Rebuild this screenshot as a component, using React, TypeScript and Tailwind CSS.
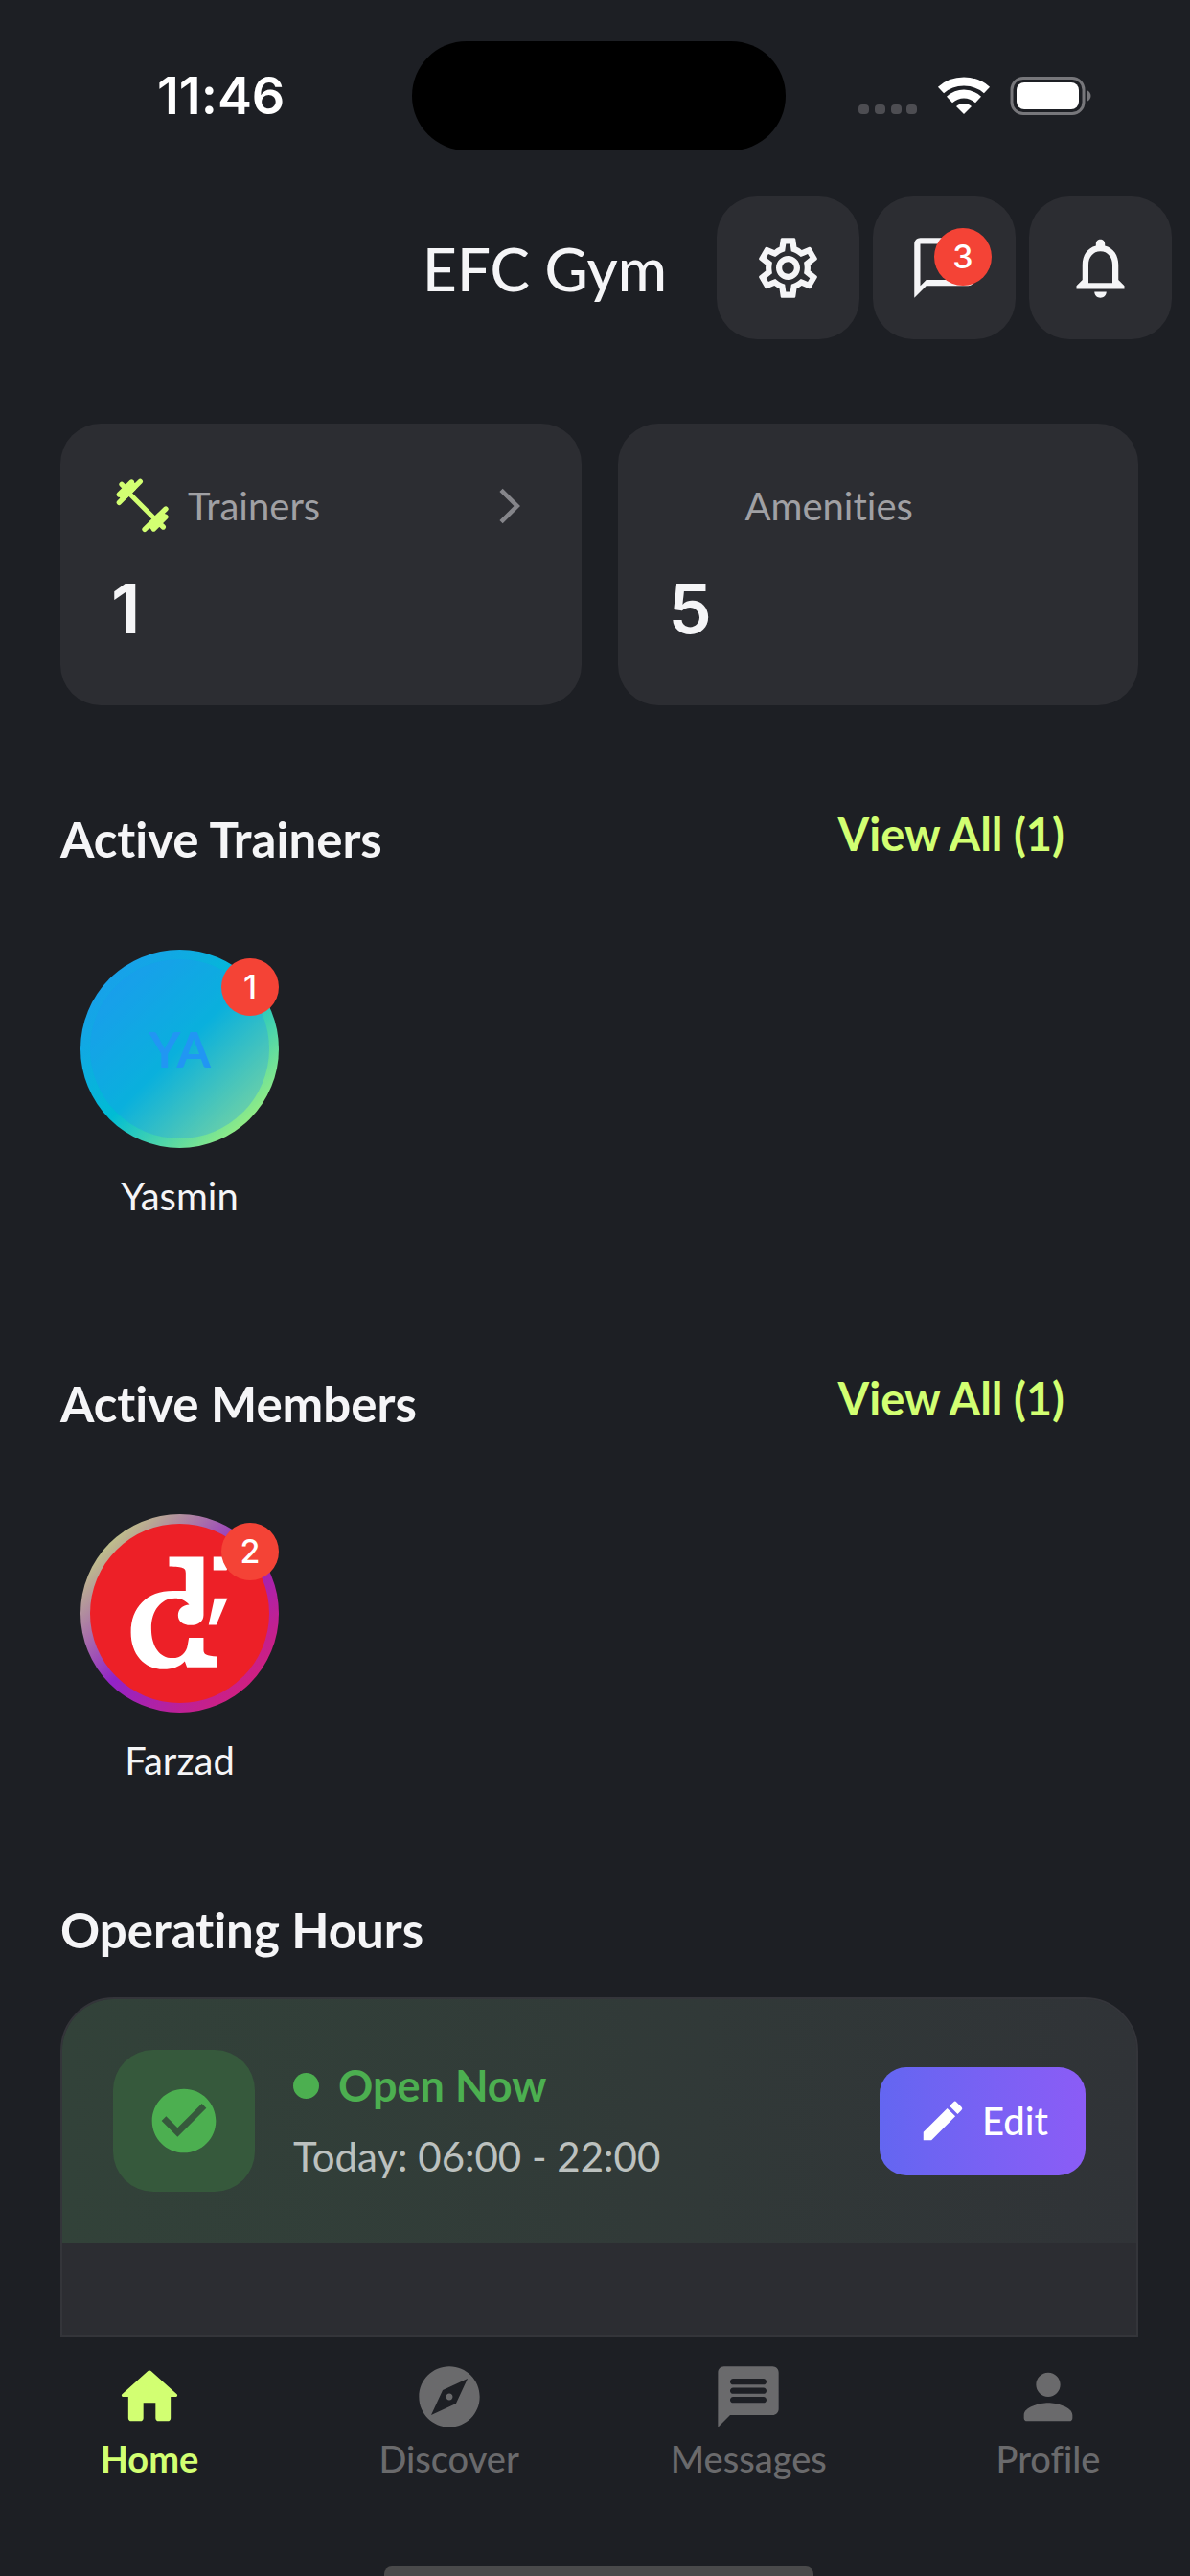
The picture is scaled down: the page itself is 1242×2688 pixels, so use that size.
import type { ReactNode } from 'react';
import {
  MdArrowForwardIos,
  MdCheckCircle,
  MdChatBubbleOutline,
  MdEdit,
  MdExplore,
  MdNotificationsNone,
  MdOutlineSettings,
} from 'react-icons/md';

// Rounded Material glyphs that react-icons does not ship
const ROUNDED = {
  home: 'M10 19v-5h4v5c0 .55.45 1 1 1h3c.55 0 1-.45 1-1v-7h1.7c.46 0 .68-.57.33-.87L12.67 3.6c-.38-.34-.96-.34-1.34 0l-8.36 7.53c-.34.3-.13.87.33.87H5v7c0 .55.45 1 1 1h3c.55 0 1-.45 1-1z',
  message:
    'M20 2H4c-1.1 0-1.99.9-1.99 2L2 22l4-4h14c1.1 0 2-.9 2-2V4c0-1.1-.9-2-2-2zm-3 12H7c-.55 0-1-.45-1-1s.45-1 1-1h10c.55 0 1 .45 1 1s-.45 1-1 1zm0-3H7c-.55 0-1-.45-1-1s.45-1 1-1h10c.55 0 1 .45 1 1s-.45 1-1 1zm0-3H7c-.55 0-1-.45-1-1s.45-1 1-1h10c.55 0 1 .45 1 1s-.45 1-1 1z',
  person:
    'M12 12c2.21 0 4-1.79 4-4s-1.79-4-4-4-4 1.79-4 4 1.79 4 4 4zm0 2c-2.67 0-8 1.34-8 4v1c0 .55.45 1 1 1h14c.55 0 1-.45 1-1v-1c0-2.66-5.33-4-8-4z',
};

function RoundedIcon({ name }: { name: keyof typeof ROUNDED }) {
  return (
    <svg viewBox="0 0 24 24" className="size-[76px]" fill="currentColor">
      <path d={ROUNDED[name]} />
    </svg>
  );
}

function DumbbellIcon() {
  return (
    <svg viewBox="33 30 198 198" className="size-[66px]" fill="none" stroke="#d2ff72" strokeWidth="16" strokeLinecap="round">
      <path strokeWidth="15" d="M88 88L172 172" />
      <path d="M58 118L124 52M58 93L97 54M66 61L88 83" />
      <path d="M72 94L98 68" strokeWidth="30" />
      <path d="M204 138L138 202M204 163L166 201M196 195L176 175" />
      <path d="M190 162L164 188" strokeWidth="30" />
    </svg>
  );
}

function StatusBar() {
  return (
    <div className="grid grid-cols-[1fr_390px_1fr] items-center pt-[43px] pl-2">
      <span className="pl-[156px] font-['Inter',sans-serif] text-[54px] leading-[60px] font-semibold text-white">11:46</span>
      <div className="h-[114px] rounded-full bg-black" />
      <div className="flex items-center justify-end pr-[102px]">
        <svg viewBox="0 0 244 40" className="h-[40px] w-[244px]">
          <g fill="#4d4d52">
            <rect x="0" y="29" width="11" height="10" rx="4" />
            <rect x="17" y="29" width="11" height="10" rx="4" />
            <rect x="34" y="29" width="11" height="10" rx="4" />
            <rect x="50" y="29" width="11" height="10" rx="4" />
          </g>
          <g fill="none" stroke="#fff" strokeWidth="9">
            <path d="M86 14C99 2 121 2 134 14" />
            <path d="M95 24C104 16 116 16 125 24" />
          </g>
          <path d="M110 39L102 31C106 27 114 27 118 31Z" fill="#fff" />
          <rect x="160" y="1.500" width="75" height="37" rx="12" fill="none" stroke="#77777b" strokeWidth="3" />
          <rect x="165" y="6" width="65" height="28" rx="8" fill="#fff" />
          <path d="M238 14C244 16 244 24 238 26Z" fill="#77777b" />
        </svg>
      </div>
    </div>
  );
}

function CountBadge({ count, className }: { count: number; className: string }) {
  return (
    <span
      className={`absolute flex size-[60px] items-center justify-center rounded-full bg-[#f44336] font-['Inter',sans-serif] text-[34px] leading-none font-medium text-white ${className}`}
    >
      {count}
    </span>
  );
}

function HeaderButton({ label, children }: { label: string; children: ReactNode }) {
  return (
    <button aria-label={label} className="relative flex size-[149px] items-center justify-center rounded-[42px] bg-[#2c2d32] text-[#f5f5f7]">
      {children}
    </button>
  );
}

function StatCard({ label, value, icon, chevron }: { label: string; value: number; icon?: ReactNode; chevron?: boolean }) {
  return (
    <button className="rounded-[42px] bg-[#2c2d32] px-[53px] pt-[53px] pb-[61px] text-left">
      <span className="flex h-[66px] items-center gap-[14px]">
        <span className="w-[66px]">{icon}</span>
        <span className="flex-1 text-[40px] leading-[48px] text-[#a0a0a4]">{label}</span>
        {chevron && <MdArrowForwardIos className="size-[44px] text-[#85858a]" />}
      </span>
      <span className="mt-[34px] block font-['Inter',sans-serif] text-[72px] leading-[80px] font-semibold text-[#f5f5f7]">{value}</span>
    </button>
  );
}

function PeopleSection({ title, name, count, avatar, className }: {
  title: string;
  name: string;
  count: number;
  avatar: ReactNode;
  className: string;
}) {
  return (
    <section className={className}>
      <div className="flex h-[66px] items-end justify-between">
        <h2 className="text-[51px] leading-[60px] font-bold text-[#f5f5f7]">{title}</h2>
        <a href="#all" className="self-start pr-[77px] text-[47px] leading-[60px] font-bold text-[#d2ff72]">View All (1)</a>
      </div>
      <button className="relative mt-[85px] ml-[21px] flex w-[207px] flex-col items-center gap-[26px]">
        {avatar}
        <span className="text-[40px] leading-[48px] text-[#f5f5f7]">{name}</span>
        <CountBadge count={count} className="top-[9px] right-0" />
      </button>
    </section>
  );
}

function InitialsAvatar() {
  return (
    <span className="block size-[207px] rounded-full bg-[linear-gradient(135deg,#2196f3,#00bcd4,#ccff66)] p-[10px]">
      <span className="flex size-full items-center justify-center rounded-full bg-[#2196f3]/30 text-[51px] leading-none font-bold text-[#2196f3]">
        YA
      </span>
    </span>
  );
}

function LogoAvatar() {
  return (
    <span className="block size-[207px] rounded-full bg-[linear-gradient(135deg,#d2ff72,#9223c8,#e91e63)] p-[10px]">
      <svg viewBox="30 30 562 562" className="size-full rounded-full bg-[#ed2027]" fill="#fff">
        <path d="M278 134H386V316C386 336 370 348 345 348C321 348 306 336 306 317C306 298 320 285 341 284C328 270 313 264 296 264C252 264 222 304 222 358C222 415 249 451 288 451C316 451 332 434 336 410L340 388H386V425C386 440 394 444 429 446V480H334L327 461C311 478 290 486 260 486C199 486 158 438 158 370C158 292 208 240 290 240H330V184C330 169 324 166 278 164Z" />
        <path d="M420 264H461L426 347H402Z" />
        <path d="M417 134H480L458 176H417Z" />
      </svg>
    </span>
  );
}

function OperatingHours() {
  return (
    <section className="mt-[123px] flex flex-1 flex-col">
      <h2 className="text-[51px] leading-[60px] font-bold text-[#f5f5f7]">Operating Hours</h2>
      <div className="mt-10 flex-1 overflow-hidden rounded-t-[56px] border-2 border-[#34353a] bg-[#2c2d32]">
        <div className="flex items-center bg-linear-to-r from-[#324239] to-[#303337] p-[53px]">
          <span className="flex size-[148px] items-center justify-center rounded-[42px] bg-[#36593c]">
            <MdCheckCircle className="size-[80px] text-[#4caf50]" />
          </span>
          <div className="ml-[40px] flex-1">
            <p className="flex items-center gap-[20px] text-[45px] leading-[74px] font-bold text-[#4caf50]">
              <span className="size-[27px] rounded-full bg-[#4caf50]" />
              Open Now
            </p>
            <p className="text-[42px] leading-[74px] text-[#bcc1bf]">Today: 06:00 - 22:00</p>
          </div>
          <button className="flex h-[113px] w-[215px] items-center justify-center gap-[14px] rounded-[28px] bg-linear-to-r from-[#6366f1] to-[#8b5cf6] text-[40px] font-medium text-white">
            <MdEdit className="size-[54px]" />
            Edit
          </button>
        </div>
      </div>
    </section>
  );
}

function NavItem({ label, active, children }: { label: string; active?: boolean; children: ReactNode }) {
  return (
    <a
      href={`#${label.toLowerCase()}`}
      className={`flex w-[260px] flex-col items-center text-[38px] leading-[52px] ${active ? 'font-bold text-[#d2ff72]' : 'font-medium text-[#6a6a6c]'}`}
    >
      {children}
      {label}
    </a>
  );
}

export default function App() {
  return (
    <div className="flex h-screen flex-col overflow-hidden bg-[#1d1f24] font-['Lato',sans-serif] [font-variant-ligatures:none]">
      <StatusBar />

      {/* App bar */}
      <header className="flex items-center justify-end gap-[14px] pt-12 pr-[19px]">
        <h1 className="mr-[38px] text-[62px] leading-[72px] font-medium text-[#f5f5f7]">EFC Gym</h1>
        <HeaderButton label="Settings"><MdOutlineSettings className="size-[75px]" /></HeaderButton>
        <HeaderButton label="Messages">
          <MdChatBubbleOutline className="size-[75px]" />
          <CountBadge count={3} className="top-[33px] right-[25px]" />
        </HeaderButton>
        <HeaderButton label="Notifications"><MdNotificationsNone className="size-[75px]" /></HeaderButton>
      </header>

      <main className="flex min-h-0 flex-1 flex-col overflow-hidden pt-[88px] pr-[54px] pl-[63px]">
        <div className="grid grid-cols-2 gap-[38px]">
          <StatCard label="Trainers" value={1} icon={<DumbbellIcon />} chevron />
          <StatCard label="Amenities" value={5} />
        </div>
        <PeopleSection className="mt-[104px]" title="Active Trainers" name="Yasmin" count={1} avatar={<InitialsAvatar />} />
        <PeopleSection className="mt-[157px]" title="Active Members" name="Farzad" count={2} avatar={<LogoAvatar />} />
        <OperatingHours />
      </main>

      {/* Bottom navigation */}
      <nav className="pt-6 pl-2">
        <div className="flex justify-between pr-[18px] pl-[18px]">
          <NavItem label="Home" active><RoundedIcon name="home" /></NavItem>
          <NavItem label="Discover"><MdExplore className="size-[76px]" /></NavItem>
          <NavItem label="Messages"><RoundedIcon name="message" /></NavItem>
          <NavItem label="Profile"><RoundedIcon name="person" /></NavItem>
        </div>
        <div className="mx-auto mt-[87px] h-[10px] w-[448px] rounded-t-lg bg-[#4a4a4b]" />
      </nav>
    </div>
  );
}
